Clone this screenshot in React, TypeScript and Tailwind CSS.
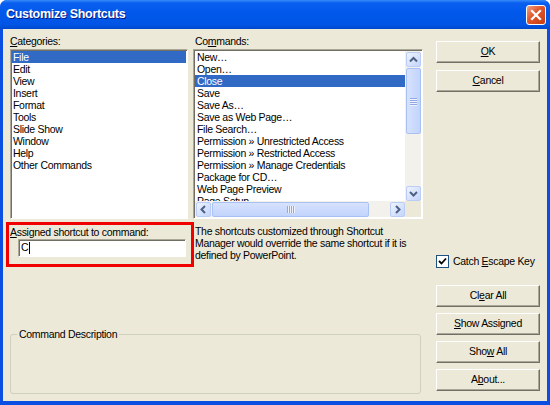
const categories = ["File", "Edit", "View", "Insert", "Format", "Tools", "Slide Show", "Window", "Help", "Other Commands"];

const commands = [
  "New…",
  "Open…",
  "Close",
  "Save",
  "Save As…",
  "Save as Web Page…",
  "File Search…",
  "Permission » Unrestricted Access",
  "Permission » Restricted Access",
  "Permission » Manage Credentials",
  "Package for CD…",
  "Web Page Preview",
  "Page Setup…",
];

const arrows: Record<string, string> = {
  up: "M4 9.5 L7.5 6 L11 9.5",
  down: "M4 6 L7.5 9.5 L11 6",
  left: "M9 4 L5.5 7.5 L9 11",
  right: "M6 4 L9.5 7.5 L6 11",
};

function ScrollButton({ dir }: { dir: string }) {
  return (
    <div className="flex h-[15px] w-[15px] shrink-0 items-center justify-center rounded-[2px] border border-[#b9cdf7] bg-[linear-gradient(135deg,#eef3fe,#c4d5fb)]">
      <svg width="13" height="13" viewBox="1 1 13 13">
        <path d={arrows[dir]} fill="none" stroke="#4d6185" strokeWidth="2" />
      </svg>
    </div>
  );
}

function Key({ children }: { children: string }) {
  return <span className="underline underline-offset-[1px]">{children}</span>;
}

function Button({ children }: { children: React.ReactNode }) {
  return (
    <div className="flex h-[22px] w-[104px] items-center justify-center border border-t-white border-l-white border-r-[#716f64] border-b-[#716f64] bg-[#ece9d8] shadow-[inset_-1px_-1px_0_#aca899]">
      <span>{children}</span>
    </div>
  );
}

export default function App() {
  return (
    <div className="h-[405px] w-[550px] bg-white [font-family:'Liberation_Sans',Arial,sans-serif] text-[10.5px] tracking-[-0.3px] text-black">
      <div className="flex h-full flex-col rounded-t-[7px] bg-[#0a4fe2]">
        {/* Title bar */}
        <div className="flex h-[29px] shrink-0 items-center justify-between rounded-t-[7px] bg-[linear-gradient(180deg,#3a8cf8_0%,#0a5ff0_10%,#0058ea_45%,#0055e5_85%,#0048cc_100%)] pl-[6px] pr-[4px]">
          <span className="text-[12.5px] font-bold tracking-[-0.3px] text-white [text-shadow:1px_1px_0_#0a1883]">
            Customize Shortcuts
          </span>
          <div className="mt-[1px] flex h-[20px] w-[20px] items-center justify-center rounded-[3px] border border-white bg-[linear-gradient(135deg,#f0a080,#e0552b_45%,#c83c10)]">
            <svg width="12" height="12" viewBox="0 0 12 12">
              <path d="M2 2 L10 10 M10 2 L2 10" stroke="white" strokeWidth="2.2" strokeLinecap="square" />
            </svg>
          </div>
        </div>

        {/* Body */}
        <div className="mx-[3px] mb-[4px] flex flex-1 bg-[#ece9d8]">
          {/* Left area */}
          <div className="flex w-[420px] flex-col pl-[7px] pt-[6px]">
            <div className="flex gap-[5px]">
              {/* Categories */}
              <div className="flex w-[178px] flex-col">
                <div className="h-[14px] leading-[12px]">
                  <Key>C</Key>ategories:
                </div>
                <div className="h-[170px] border border-t-[#aca899] border-l-[#aca899] border-r-white border-b-white bg-white p-[1px] shadow-[inset_1px_1px_0_#716f64]">
                  {categories.map((c, i) => (
                    <div
                      key={c}
                      className={`h-[12px] pl-[1px] leading-[12px] ${i === 0 ? "bg-[#316ac5] text-white" : ""}`}
                    >
                      {c}
                    </div>
                  ))}
                </div>
              </div>

              {/* Commands */}
              <div className="flex w-[230px] flex-col">
                <div className="h-[14px] pl-[2px] leading-[12px]">
                  Co<Key>m</Key>mands:
                </div>
                <div className="flex h-[170px] flex-col border border-t-[#aca899] border-l-[#aca899] border-r-white border-b-white bg-white p-[1px] shadow-[inset_1px_1px_0_#716f64]">
                  <div className="flex h-[150px]">
                    <div className="flex-1 overflow-hidden">
                      {commands.map((c, i) => (
                        <div
                          key={c}
                          className={`h-[12px] whitespace-nowrap pl-[2px] leading-[12px] ${i === 2 ? "bg-[#316ac5] text-white" : ""}`}
                        >
                          {c}
                        </div>
                      ))}
                    </div>
                    {/* Vertical scrollbar */}
                    <div className="flex w-[16px] flex-col items-center bg-[#f3f1ec] pt-[1px]">
                      <ScrollButton dir="up" />
                      <div className="mt-[1px] flex h-[66px] w-[15px] items-center justify-center rounded-[2px] border border-[#a9c0f3] bg-[linear-gradient(90deg,#d6e2fd,#c2d4fc)]">
                        <div className="flex flex-col gap-[1px]">
                          {[0, 1, 2, 3].map((i) => (
                            <div key={i} className="h-[1px] w-[7px] bg-[#8fa9e6] shadow-[0_1px_0_#eef3fe]" />
                          ))}
                        </div>
                      </div>
                      <div className="flex-1" />
                      <ScrollButton dir="down" />
                    </div>
                  </div>
                  {/* Horizontal scrollbar */}
                  <div className="flex h-[16px]">
                    <div className="flex flex-1 items-center bg-[#f3f1ec] pl-[1px]">
                      <ScrollButton dir="left" />
                      <div className="ml-[1px] flex h-[15px] w-[157px] items-center justify-center rounded-[2px] border border-[#a9c0f3] bg-[linear-gradient(180deg,#d6e2fd,#c2d4fc)]">
                        <div className="flex gap-[1px]">
                          {[0, 1, 2, 3].map((i) => (
                            <div key={i} className="h-[7px] w-[1px] bg-[#8fa9e6] shadow-[1px_0_0_#eef3fe]" />
                          ))}
                        </div>
                      </div>
                      <div className="flex-1" />
                      <ScrollButton dir="right" />
                    </div>
                    <div className="w-[16px] bg-[#ece9d8]" />
                  </div>
                </div>
              </div>
            </div>

            {/* Assigned shortcut row */}
            <div className="mt-[3px] flex">
              <div className="-ml-[4px] h-[45px] w-[188px] shrink-0 border-[3px] border-[#f00000] pl-[1px] pt-[1px]">
                <div className="h-[12px] leading-[12px]">
                  <Key>A</Key>ssigned shortcut to command:
                </div>
                <div className="ml-[8px] mt-[1px] flex h-[18px] w-[168px] items-center border border-t-[#aca899] border-l-[#aca899] border-r-white border-b-white bg-white pl-[2px] shadow-[inset_1px_1px_0_#716f64]">
                  C<span className="ml-[1px] h-[12px] w-[1px] bg-black" />
                </div>
              </div>
              <div className="w-[230px] pl-[1px] pt-[3px] leading-[12px]">
                The shortcuts customized through Shortcut Manager would override the same shortcut if it is defined by
                PowerPoint.
              </div>
            </div>

            {/* Command Description */}
            <div className="relative mt-[67px] h-[60px] w-[411px] rounded-[3px] border border-[#d0d0bf]">
              <span className="absolute -top-[7px] left-[6px] bg-[#ece9d8] px-[2px] leading-[12px]">
                Command Description
              </span>
            </div>
          </div>

          {/* Right column */}
          <div className="ml-[13px] flex flex-col pt-[12px]">
            <Button>
              <Key>O</Key>K
            </Button>
            <div className="mt-[7px]">
              <Button>
                <Key>C</Key>ancel
              </Button>
            </div>
            <div className="mt-[163px] flex h-[13px] items-center gap-[4px]">
              <div className="flex h-[13px] w-[13px] items-center justify-center border border-[#1c5180] bg-white">
                <svg width="9" height="9" viewBox="0 0 9 9">
                  <path d="M1 4 L3.5 6.5 L8 1.5" fill="none" stroke="black" strokeWidth="1.8" />
                </svg>
              </div>
              <span>
                Catch <Key>E</Key>scape Key
              </span>
            </div>
            <div className="mt-[17px] flex flex-col gap-[6px]">
              <Button>
                Cl<Key>e</Key>ar All
              </Button>
              <Button>
                <Key>S</Key>how Assigned
              </Button>
              <Button>
                Sho<Key>w</Key> All
              </Button>
              <Button>
                A<Key>b</Key>out...
              </Button>
            </div>
          </div>
        </div>
      </div>
    </div>
  );
}
